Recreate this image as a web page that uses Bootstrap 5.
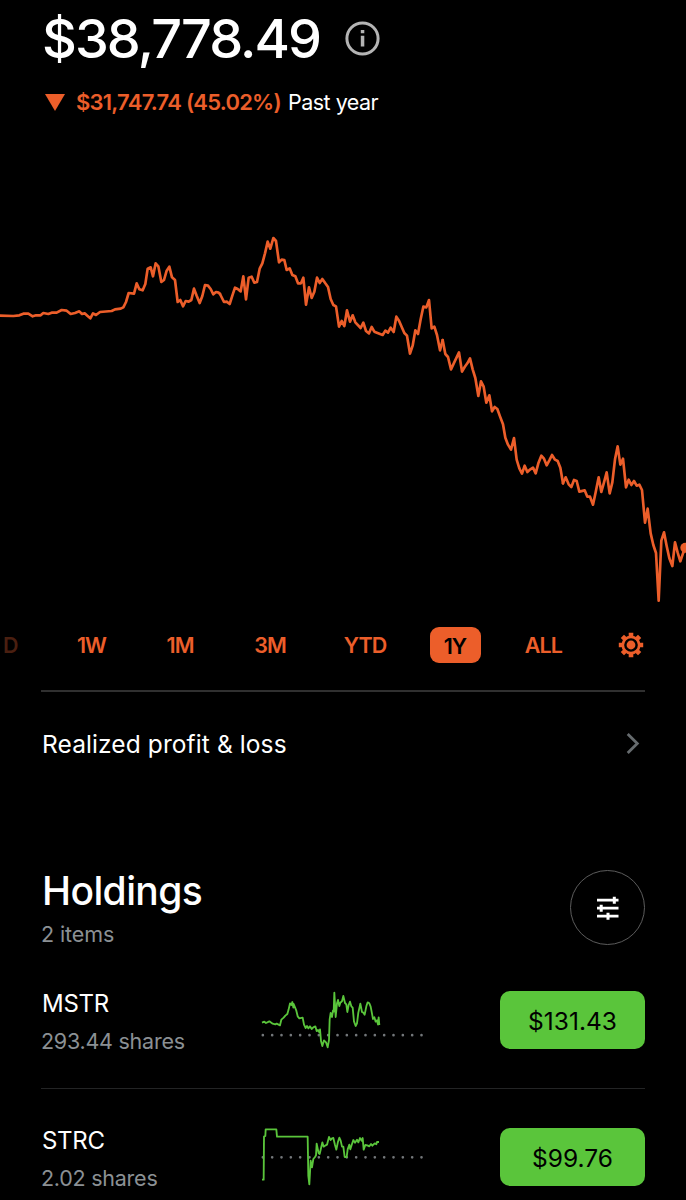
<!DOCTYPE html>
<html lang="en">
<head>
<meta charset="utf-8">
<meta name="viewport" content="width=device-width, initial-scale=1">
<title>Portfolio</title>
<link href="https://cdn.jsdelivr.net/npm/bootstrap@5.3.0/dist/css/bootstrap.min.css" rel="stylesheet">
<style>
:root{--down:#ec5e2a;--up:#5ac53b}
html{overflow:hidden}
body{background:#000;color:#fff;font-family:Inter,"Liberation Sans",sans-serif;height:1200px;overflow:hidden}
.inset{padding-left:41px;padding-right:41px}
.balance{height:77px;font-size:54px;line-height:79px;letter-spacing:-1.95px;font-weight:500;padding-left:42px}
.info{margin-right:306px}
.change{height:50px;font-size:22px;line-height:50px}
.drop{color:var(--down);font-weight:600;letter-spacing:-.76px;margin-left:11px}
.past{font-size:21.5px;letter-spacing:-.5px;margin-left:7px}
.chart{margin-top:98px;height:385px;width:686px}
.ranges{height:70px;color:var(--down);font-size:21.5px;font-weight:600;letter-spacing:-.9px;line-height:38px;display:grid;grid-template-columns:47px 89px 88px 92px 98px 82px 95px 80px;align-items:center;justify-items:center}
.faded{color:#4a1f10;margin-left:3px;justify-self:start}
.chosen{background:var(--down);color:#000;width:51px;height:36px;border-radius:9px;text-align:center}
.rule{height:2px;background:#303030;margin:10px 41px 0}
.pnl{height:104px;font-size:24.5px;letter-spacing:.1px;padding-left:42px}
.holdings{margin-top:74px;height:87px}
.title{font-size:39px;line-height:42px;font-weight:500;letter-spacing:-.6px;padding-left:1px}
.count{font-size:21.5px;line-height:45px;color:#8b9094;letter-spacing:-.1px}
.filter{width:75px;height:75px;border:1.2px solid #5c5c5c}
.asset{padding-top:27px;padding-bottom:28px}
.asset + .asset{padding-top:32px;border-top:1px solid #232425}
.who{width:209px}
.sym{font-size:24px;line-height:40px;letter-spacing:-.3px;padding-left:1px}
.qty{font-size:21.5px;line-height:35px;color:#8b9094;letter-spacing:-.25px}
.price{width:145px;height:58px;background:var(--up);border-radius:10px;color:#000;font-size:24.5px;margin-top:7px;padding-top:2px}
</style>
</head>
<body>
<header>
  <div class="balance d-flex align-items-center"><span>$38,778.49</span>
    <svg class="info ms-auto" width="35" height="35" viewBox="0 0 35 35"><circle cx="17.5" cy="17.5" r="15.6" fill="none" stroke="#b4b4b4" stroke-width="3"/><path d="M15.8 9h3.5v3.2h-3.5zM15.8 14.8h3.5v10.6h-3.5z" fill="#b4b4b4"/></svg>
  </div>
  <div class="change inset d-flex align-items-center"><svg class="ms-1" width="20" height="17" viewBox="0 0 20 17"><path d="M0 0h20L10 17z" fill="#ec5e2a"/></svg>
    <span class="drop">$31,747.74 (45.02%)</span><span class="past">Past year</span></div>
</header>
<svg class="chart d-block" viewBox="0 0 2058 1155" fill="none" stroke="#ec5e2a" stroke-width="8" stroke-linejoin="round" stroke-linecap="round">
  <polyline points="-5,272 40,273 58,271 70,266 85,266 98,274 108,271 122,271 130,264 145,267 155,263 170,263 185,255 200,257 212,267 225,264 238,259 246,267 254,265 262,272 271,280 279,265 288,270 300,261 335,258 345,253 362,251 370,247 378,231 386,204 402,206 410,175 418,193 428,196 436,177 443,131 452,127 459,154 467,115 475,124 484,171 492,165 500,137 508,125 516,157 525,165 533,231 541,225 549,244 557,228 566,230 574,225 582,191 590,212 599,234 607,213 615,180 624,182 632,192 640,208 648,201 656,203 660,207"/>
  <polyline transform="translate(660)" points="0,207 12,231 20,230 29,237 37,212 45,188 53,192 62,199 70,154 78,223 86,158 95,155 103,173 111,171 119,131 127,115 135,85 143,50 151,71 160,39 168,48 177,112 185,104 193,105 200,135 209,130 217,150 226,154 234,175 243,175 250,158 258,239 267,187 275,219 283,200 291,158 299,174 307,162 316,175 324,186 332,222 340,240 348,244 357,305 365,288 373,303 381,256 390,290 398,271 406,292 422,309 430,293 438,318 447,325 455,306 463,320 488,330 496,317 504,323 512,308 521,321 529,275 537,287 553,324 561,332 570,386 578,362 586,316 594,327 602,283 610,245 619,247 627,225 635,310 643,305 651,330 660,376 668,345"/>
  <polyline transform="translate(1260)" points="68,345 76,387 84,396 93,433 101,416 117,382 126,440 134,426 142,415 150,400 158,433 166,459 175,513 183,469 191,485 199,533 208,511 216,559 224,546 232,552 240,574 249,598 256,638 264,659 273,674 282,639 290,704 298,730 306,746 314,722 322,741 331,733 339,728 347,745 355,715 364,692 372,701 380,721 388,706 396,690 405,704 413,708 421,728 429,775"/>
  <polyline transform="translate(1620)" points="69,775 77,757 86,778 94,786 102,765 110,768 118,800 134,796 142,815 150,815 159,839 167,802 176,757 184,801 192,772 200,742 209,805 217,772 225,703 233,664 241,719 249,701 258,787 266,764 274,780 282,768 290,782 298,779 306,795 315,893 323,851 332,925 340,960 348,984 356,1127 364,947 372,922 380,963 388,1000 397,1023 405,952 413,983 421,1009 429,985 438,967"/>
  <circle cx="2056" cy="968" r="15" fill="#ec5e2a" stroke="none"/>
</svg>
<nav class="ranges">
  <span class="faded">D</span><span>1W</span><span>1M</span><span>3M</span><span>YTD</span><span class="chosen">1Y</span><span>ALL</span>
  <svg width="26" height="26" viewBox="-13 -13 26 26" fill="none" stroke="#ec5e2a"><circle r="8.2" stroke-width="2.7"/><circle r="4.4" fill="#ec5e2a" stroke="none"/><g stroke-width="4.6"><path d="M0-12.2V-8.5M0 8.5V12.2M-12.2 0H-8.5M8.5 0H12.2"/><path d="M0-12.2V-8.5M0 8.5V12.2M-12.2 0H-8.5M8.5 0H12.2" transform="rotate(45)"/></g></svg>
</nav>
<div class="rule"></div>
<div class="inset pnl d-flex align-items-center justify-content-between"><span>Realized profit &amp; loss</span>
  <svg class="me-1" width="16" height="24" viewBox="0 0 16 24"><path d="M2.7 2 12.3 11.500 2.7 21" fill="none" stroke="#666b6e" stroke-width="2.8"/></svg></div>
<section class="holdings inset d-flex justify-content-between">
  <div><div class="title">Holdings</div><div class="count">2 items</div></div>
  <div class="filter rounded-circle d-flex align-items-center justify-content-center"><svg width="22" height="24" viewBox="0 0 22 24" stroke="#fff" stroke-width="2.7"><path d="M0 4.2H21.500M0 12.2H21.500M0 20.2H21.500"/><path d="M17.3.7V7.7M4.2 8.7V15.7M11 16.7V23.7" stroke-width="3"/></svg></div>
</section>
<main class="inset">
  <div class="asset d-flex">
    <div class="who"><div class="sym">MSTR</div><div class="qty">293.44 shares</div></div>
    <svg width="190" height="76" viewBox="0 12 570 228" fill="none" stroke-linejoin="round"><path d="M38.500 165.500H520" stroke="#73777a" stroke-width="8" stroke-linecap="round" stroke-dasharray="0 28"/><polyline stroke="#5ac53b" stroke-width="5.500" points="36,128 43,125 48,129 58,124 68,131 76,133 80,131 90,136 94,119 101,113 106,107 112,102 116,88 120,70 124,75 127,66 130,83 131,72 139,92 143,109 148,115 158,113 162,134 167,144 171,138 175,145 180,139 185,147 190,142 196,139 200,153 204,150 208,157 210,148 213,183 217,198 222,181 228,187 233,202 237,180 239,118 242,99 246,111 249,91 251,95 253,38 257,111 261,70 264,60 268,78 271,68 276,64 280,48 285,69 289,73 292,96 296,75 300,65 304,79 308,83 312,124 317,138 321,130 325,98 331,71 336,96 340,98 344,104 349,79 353,67 358,70 362,80 366,101 369,117 373,112 377,125 381,121 384,134 386,112 388,135"/></svg>
    <div class="price ms-auto d-flex align-items-center justify-content-center">$131.43</div>
  </div>
  <div class="asset d-flex">
    <div class="who"><div class="sym">STRC</div><div class="qty">2.02 shares</div></div>
    <svg width="190" height="76" viewBox="0 423 570 228" fill="none" stroke-linejoin="round"><path d="M38.500 532H520" stroke="#73777a" stroke-width="8" stroke-linecap="round" stroke-dasharray="0 28"/><polyline stroke="#5ac53b" stroke-width="5.500" points="36,599 41,599 42,470 46,468 47,448 79,448 81,470 173,470 175,588 178,613 182,542 186,562 190,537 195,531 198,526 200,491 206,520 209,522 213,505 217,487 221,500 227,496 231,494 237,471 242,480 246,475 250,474 255,495 259,509 264,485 268,473 272,482 276,500 280,500 284,531 290,531 293,508 298,494 301,508 305,495 310,480 315,488 321,479 325,487 330,474 335,482 338,474 341,509 346,495 352,496 358,499 363,492 367,497 374,490 379,493 381,486 387,486"/></svg>
    <div class="price ms-auto d-flex align-items-center justify-content-center">$99.76</div>
  </div>
</main>
<script src="https://cdn.jsdelivr.net/npm/bootstrap@5.3.0/dist/js/bootstrap.bundle.min.js"></script>
</body>
</html>
